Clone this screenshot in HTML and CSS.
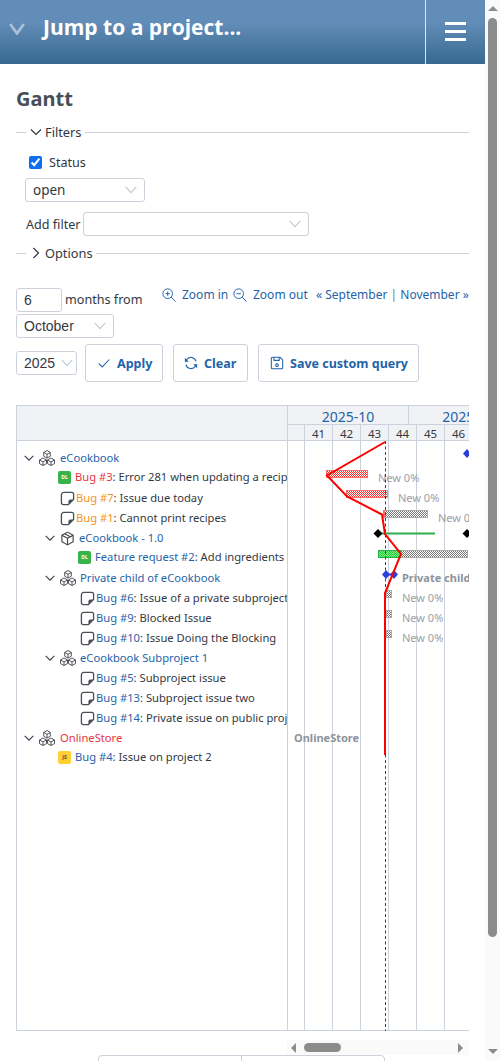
FILE: index.html
```html
<!DOCTYPE html>
<html lang="en">
<head>
<meta charset="utf-8">
<title>Gantt</title>
<link rel="stylesheet" href="styles.css">
</head>
<body>
<svg class="defs" width="0" height="0" aria-hidden="true">
  <symbol id="note" viewBox="0 0 16 16"><path d="M4 1.500h8.500a2 2 0 0 1 2 2V9L9 14.500H3.500a2 2 0 0 1-2-2V4a2.500 2.500 0 0 1 2.500-2.500z" fill="none" stroke="#4a4f57" stroke-width="1.400"/><path d="M14.500 9H11a2 2 0 0 0-2 2v3.500z" fill="#4a4f57"/></symbol>
  <symbol id="cubes" viewBox="0 0 16 16"><g fill="none" stroke="#3f444b" stroke-width=".9" stroke-linejoin="round"><path d="M8 .5l3.300 1.900v3.800L8 8.100 4.700 6.200V2.400z"/><path d="M4.700 2.400L8 4.300l3.300-1.900M8 4.300v3.800"/><path d="M4 8l3.500 2v3.600L4 15.500.5 13.600V10z"/><path d="M.5 10L4 11.900 7.500 10M4 11.900v3.600"/><path d="M12 8l3.500 2v3.600L12 15.500l-3.500-1.900V10z"/><path d="M8.500 10l3.500 1.900 3.500-1.900M12 11.900v3.600"/></g></symbol>
  <symbol id="box" viewBox="0 0 16 16"><g fill="none" stroke="#3f444b" stroke-width="1.200" stroke-linejoin="round"><path d="M8 1.200l6 3.300v7L8 14.800l-6-3.300v-7z"/><path d="M2 4.500l6 3.300 6-3.300M8 7.800v7M5 2.900l6 3.300"/></g></symbol>
  <symbol id="chev" viewBox="0 0 10 10"><path d="M.7 2.800L5 7.200l4.300-4.400" fill="none" stroke="#3f444b" stroke-width="1.200"/></symbol>
</svg>

<div class="page">
<header class="topbar">
  <svg class="jump-chev" viewBox="0 0 16 12"><path d="M1.200 1L8 10.500 14.800 1" fill="none" stroke="#a9c0d6" stroke-width="2.800"/></svg>
  <span class="jump-title">Jump to a project...</span>
  <div class="menu-btn"><span></span><span></span><span></span></div>
</header>

<main class="content">
  <h2 class="page-title">Gantt</h2>

  <div class="legend legend-filters">
    <span class="legend-line short"></span>
    <svg class="legend-icon" viewBox="0 0 12 12"><path d="M1 3.500l5 5 5-5" fill="none" stroke="#33383f" stroke-width="1.200"/></svg>
    <span>Filters</span>
    <span class="legend-line"></span>
  </div>

  <div class="filters">
    <label class="status-label"><input type="checkbox" checked> <span>Status</span></label>
    <select class="sel sel-open"><option>open</option></select>
    <div class="add-filter"><span>Add filter</span><select class="sel sel-add"><option></option></select></div>
  </div>

  <div class="legend legend-options">
    <span class="legend-line short"></span>
    <svg class="legend-icon" viewBox="0 0 12 12"><path d="M3.500 1l5 5-5 5" fill="none" stroke="#33383f" stroke-width="1.200"/></svg>
    <span>Options</span>
    <span class="legend-line"></span>
  </div>

  <div class="range-row">
    <input class="num" type="text" value="6">
    <span class="months">months from</span>
    <a class="link zoom zoom-in"><svg class="ico" viewBox="0 0 16 16"><g fill="none" stroke="#1f63a8" stroke-width="1.100"><circle cx="6.500" cy="6.500" r="5.500"/><path d="M10.500 10.500l5 5M4 6.500h5M6.500 4v5"/></g></svg>Zoom in</a>
    <a class="link zoom zoom-out"><svg class="ico" viewBox="0 0 16 16"><g fill="none" stroke="#1f63a8" stroke-width="1.100"><circle cx="6.500" cy="6.500" r="5.500"/><path d="M10.500 10.500l5 5M4 6.500h5"/></g></svg>Zoom out</a>
    <span class="pager"><a class="link">« September</a> <span class="sep">|</span> <a class="link">November »</a></span>
  </div>
  <select class="sel sel-month"><option>October</option></select>
  <div class="action-row">
    <select class="sel sel-year"><option>2025</option></select>
    <a class="btn btn-apply"><svg class="ico" viewBox="0 0 16 16"><path d="M2 8.500l4 4 8-8.500" fill="none" stroke="#1f63a8" stroke-width="1.200"/></svg>Apply</a>
    <a class="btn btn-clear"><svg class="ico" viewBox="0 0 16 16"><g fill="none" stroke="#1f63a8" stroke-width="1.300"><path d="M13.800 6.200A6 6 0 0 0 3 4.300L1.800 6"/><path d="M2.200 9.800A6 6 0 0 0 13 11.700L14.200 10"/></g><path d="M1 2v4.500h4.500zM15 14V9.500h-4.500z" fill="#1f63a8"/></svg>Clear</a>
    <a class="btn btn-save"><svg class="ico" viewBox="0 0 16 16"><g fill="none" stroke="#1f63a8" stroke-width="1.200"><path d="M3 1.500h8.500l3 3V13a1.500 1.500 0 0 1-1.500 1.500H3A1.500 1.500 0 0 1 1.500 13V3A1.500 1.500 0 0 1 3 1.500z"/><path d="M4.500 1.500v3.500h6v-3.500"/><circle cx="8" cy="10.500" r="1.500"/></g></svg>Save custom query</a>
  </div>

  <div class="gantt">
    <div class="subjects">
      <div class="subjects-head"></div>
      <div class="subjects-body">
        <div class="row lvl0 proj"><svg class="tog"><use href="#chev"/></svg><svg class="pico"><use href="#cubes"/></svg><a class="link">eCookbook</a></div>
        <div class="row issue badge-row lvl0b"><i class="badge dl">DL</i><span class="txt"><a class="red">Bug #3</a>: Error 281 when updating a recipe</span></div>
        <div class="row issue note-row lvl0n"><svg class="nico"><use href="#note"/></svg><span class="txt"><a class="orange">Bug #7</a>: Issue due today</span></div>
        <div class="row issue note-row lvl0n"><svg class="nico"><use href="#note"/></svg><span class="txt"><a class="orange">Bug #1</a>: Cannot print recipes</span></div>
        <div class="row lvl1 proj"><svg class="tog"><use href="#chev"/></svg><svg class="pico vico"><use href="#box"/></svg><a class="link">eCookbook - 1.0</a></div>
        <div class="row issue badge-row lvl1b"><i class="badge dl">DL</i><span class="txt"><a class="link">Feature request #2</a>: Add ingredients categories</span></div>
        <div class="row lvl1 proj"><svg class="tog"><use href="#chev"/></svg><svg class="pico"><use href="#cubes"/></svg><a class="link">Private child of eCookbook</a></div>
        <div class="row issue note-row lvl1n"><svg class="nico"><use href="#note"/></svg><span class="txt"><a class="link">Bug #6</a>: Issue of a private subproject</span></div>
        <div class="row issue note-row lvl1n"><svg class="nico"><use href="#note"/></svg><span class="txt"><a class="link">Bug #9</a>: Blocked Issue</span></div>
        <div class="row issue note-row lvl1n"><svg class="nico"><use href="#note"/></svg><span class="txt"><a class="link">Bug #10</a>: Issue Doing the Blocking</span></div>
        <div class="row lvl1 proj"><svg class="tog"><use href="#chev"/></svg><svg class="pico"><use href="#cubes"/></svg><a class="link">eCookbook Subproject 1</a></div>
        <div class="row issue note-row lvl1n"><svg class="nico"><use href="#note"/></svg><span class="txt"><a class="link">Bug #5</a>: Subproject issue</span></div>
        <div class="row issue note-row lvl1n"><svg class="nico"><use href="#note"/></svg><span class="txt"><a class="link">Bug #13</a>: Subproject issue two</span></div>
        <div class="row issue note-row lvl1n"><svg class="nico"><use href="#note"/></svg><span class="txt"><a class="link">Bug #14</a>: Private issue on public project</span></div>
        <div class="row lvl0 proj"><svg class="tog"><use href="#chev"/></svg><svg class="pico"><use href="#cubes"/></svg><a class="red">OnlineStore</a></div>
        <div class="row issue badge-row lvl0b"><i class="badge js">JS</i><span class="txt"><a class="link">Bug #4</a>: Issue on project 2</span></div>
      </div>
    </div>

    <div class="chart-wrap">
      <div class="chart-scroll">
        <div class="chart">
          <div class="months-head">
            <div class="month m1">2025-10</div>
            <div class="month m2">2025-11</div>
            <div class="month m3">2025-12</div>
          </div>
          <div class="weeks-head">
            <span class="wk wk-first"></span><span class="wk">41</span><span class="wk">42</span><span class="wk">43</span><span class="wk">44</span><span class="wk">45</span><span class="wk">46</span><span class="wk">47</span><span class="wk">48</span><span class="wk">49</span><span class="wk">50</span>
          </div>
          <div class="canvas">
            <div class="vlines"><span class="wk-first"></span><span></span><span></span><span></span><span></span><span></span><span></span><span></span><span></span><span></span><span></span></div>

            <div class="bar todo b3"><i class="late"></i></div>
            <div class="lbl l3">New 0%</div>
            <div class="bar todo b7"><i class="late"></i></div>
            <div class="lbl l7">New 0%</div>
            <div class="bar todo b1"><i class="late"></i></div>
            <div class="lbl l1">New 0%</div>
            <div class="bar todo b2"><i class="done"></i></div>
            <div class="bar todo s6"></div>
            <div class="lbl l6">New 0%</div>
            <div class="bar todo s9"></div>
            <div class="lbl l9">New 0%</div>
            <div class="bar todo s10"></div>
            <div class="lbl l10">New 0%</div>
            <div class="lbl strong lp">Private child of eCookbook</div>
            <div class="lbl strong lo">OnlineStore</div>

            <svg class="overlay" width="724" height="590">
              <path d="M97.500 0V590" stroke="#d40000" stroke-width="1" stroke-dasharray="3 2.500" fill="none"/>
              <path d="M90 92.500H147" stroke="#2fae4a" stroke-width="2" fill="none"/>
              <polygon points="90,88 94.500,92.500 90,97 85.500,92.500" fill="#000"/>
              <polygon points="179,88 183.500,92.500 179,97 174.500,92.500" fill="#000"/>
              <path d="M98 133.500H106" stroke="#2b3fe0" stroke-width="2" fill="none"/>
              <polygon points="98,129 102,133.500 98,138 94,133.500" fill="#2b3fe0"/>
              <polygon points="106,129 110,133.500 106,138 102,133.500" fill="#2b3fe0"/>
              <polygon points="179,8 183,12.500 179,17 175,12.500" fill="#2b3fe0"/>
              <path d="M97 1L39 34.500 59 55.500 94 73.500 97 93 113 113 97 152V314" fill="none" stroke="#ff0000" stroke-width="2"/>
            </svg>
          </div>
        </div>
      </div>
      <div class="hbar"><i class="arrow arrow-left"></i><i class="hthumb"></i><i class="arrow arrow-right"></i></div>
    </div>
  </div>

  <div class="tabs-row">
    <div class="tabs"><span class="tab tab-a"></span><span class="tab tab-b"></span></div>
  </div>
</main>
</div>

<div class="vbar"><i class="arrow arrow-up"></i><i class="vthumb"></i><i class="arrow arrow-down"></i></div>
</body>
</html>
```
FILE: styles.css
```css
* { box-sizing: border-box; }
html, body { margin: 0; padding: 0; height: 1061px; overflow: hidden; }
body {
  display: flex;
  background: #fff;
  color: #33383f;
  font-family: "Noto Sans", sans-serif;
  font-size: 12.6px;
}
.defs { position: absolute; }
.page { width: 485px; flex: none; height: 1061px; overflow: hidden; }
a { text-decoration: none; }
.link { color: #1f63a8; }
.red { color: #e8353f; }
.orange { color: #f4941c; }

.vbar {
  width: 15px;
  flex: none;
  height: 1061px;
  background: #fafafa;
  display: flex;
  flex-direction: column;
  align-items: center;
  padding: 6px 0 7px;
}
.vthumb { display: block; width: 9px; height: 919px; margin-top: 7px; background: #8c8c8c; border-radius: 5px; }
.arrow { display: block; width: 0; height: 0; flex: none; }
.arrow-up { border: 5px solid transparent; border-top: 0; border-bottom-color: #8c8c8c; }
.arrow-down { border: 5px solid transparent; border-bottom: 0; border-top-color: #8c8c8c; margin-top: auto; }
.arrow-left { border: 5px solid transparent; border-left: 0; border-right-color: #8c8c8c; }
.arrow-right { border: 5px solid transparent; border-right: 0; border-left-color: #8c8c8c; margin-left: auto; }

.topbar {
  height: 64px;
  display: flex;
  align-items: center;
  background: linear-gradient(#628db8 0, #628db8 22px, #38698f 64px);
  color: #fff;
}
.jump-chev { width: 16px; height: 12px; margin-left: 9px; margin-top: -6px; flex: none; }
.jump-title {
  margin-left: 18px;
  margin-top: -10px;
  font-family: "Open Sans", sans-serif;
  font-size: 21px;
  font-weight: 700;
  flex: 1;
}
.menu-btn {
  width: 60px;
  height: 64px;
  border-left: 1px solid #dde6ee;
  display: flex;
  flex-direction: column;
  align-items: center;
  justify-content: center;
  gap: 5px;
  flex: none;
  padding-bottom: 2px;
}
.menu-btn span { display: block; width: 21px; height: 3px; background: #fff; }

.content { padding: 0 16px; }
.page-title {
  margin: 21px 0 0;
  font-size: 20px;
  line-height: 27px;
  font-weight: 700;
  color: #484f58;
}
.legend { display: flex; align-items: center; height: 18px; color: #33383f; font-size: 12.8px; }
.legend-filters { margin-top: 11px; }
.legend-line { flex: 1; height: 1px; background: #ccd2dc; margin-left: 3px; }
.legend-line.short { flex: none; width: 10px; margin: 0 4px 0 0; }
.legend-icon { width: 12px; height: 12px; margin-right: 3px; flex: none; }

.filters { padding: 0 0 0 9px; }
.status-label { display: flex; align-items: center; height: 20px; margin: 11px 0 0 4px; }
.status-label input { width: 13px; height: 13px; margin: 0 7px 0 0; accent-color: #0b6ff0; }
.sel {
  appearance: none;
  display: block;
  height: 24px;
  border: 1px solid #ccd2dc;
  border-radius: 3px;
  color: #33383f;
  background: #fff url("data:image/svg+xml,%3Csvg xmlns='http://www.w3.org/2000/svg' viewBox='0 0 12 8'%3E%3Cpath d='M.7.8L6 6.700 11.300.8' fill='none' stroke='%23c4c8d4' stroke-width='1.100'/%3E%3C/svg%3E") no-repeat right 7px center / 12px 8px;
  padding: 0 0 0 7px;
  font-family: "Liberation Sans", sans-serif;
  font-size: 14px;
}
.sel-open { width: 120px; margin-top: 6px; font-family: "Noto Sans", sans-serif; font-size: 13.500px; }
.add-filter { display: flex; align-items: center; margin-top: 10px; gap: 2px; margin-left: 1px; }
.sel-add { width: 226px; }
.legend-options { margin-top: 8px; }

.range-row { display: flex; align-items: flex-start; margin-top: 26px; height: 26px; }
.num {
  width: 46px;
  height: 24px;
  border: 1px solid #ccd2dc;
  border-radius: 3px;
  padding: 0 0 0 7px;
  color: #33383f;
  font-family: "Liberation Sans", sans-serif;
  font-size: 14px;
}
.months { margin-left: 3px; line-height: 24px; width: 97px; flex: none; }
.zoom { display: flex; align-items: center; font-size: 12px; line-height: 14px; }
.ico { width: 14px; height: 14px; flex: none; }
.zoom .ico { margin-right: 6px; }
.zoom-in { width: 71px; }
.zoom-out { width: 83px; }
.pager { font-size: 12px; line-height: 14px; white-space: nowrap; color: #777; }
.sep { margin: 0; }
.sel-month { width: 98px; }
.action-row { display: flex; align-items: center; margin-top: 6px; height: 38px; }
.sel-year { width: 61px; margin-right: 8px; background-position: right 3px center; }
.btn {
  display: flex;
  align-items: center;
  height: 38px;
  border: 1px solid #ccd2dc;
  border-radius: 3px;
  color: #1f63a8;
  font-size: 12.500px;
  font-weight: 700;
  padding-left: 11px;
  white-space: nowrap;
}
.btn .ico { margin-right: 6px; }
.btn-apply { width: 78px; margin-right: 10px; }
.btn-clear { width: 75px; margin-right: 10px; padding-left: 10px; }
.btn-save { width: 161px; }

.gantt { display: flex; margin-top: 23px; align-items: flex-start; }
.subjects {
  width: 272px;
  height: 626px;
  border: 1px solid #ccd2dc;
  flex: none;
  overflow: hidden;
}
.subjects-head { height: 35px; background: #f0f2f5; border-bottom: 1px solid #ccd2dc; }
.subjects-body { padding-top: 7px; }
.row { display: flex; align-items: center; height: 20px; font-size: 11.200px; white-space: nowrap; }
.row .txt, .row a { line-height: 20px; }
.tog { width: 10px; height: 10px; margin-right: 5px; flex: none; }
.pico { width: 16px; height: 16px; margin-right: 5px; flex: none; }
.vico { width: 15px; height: 15px; margin-right: 5px; }
.nico { width: 15px; height: 15px; margin-right: 1px; flex: none; }
.lvl0 { padding-left: 7px; }
.lvl0b { padding-left: 41px; }
.lvl0n { padding-left: 43px; }
.lvl1 { padding-left: 28px; }
.lvl1 .pico { margin-right: 4px; }
.lvl1b { padding-left: 61px; }
.lvl1n { padding-left: 63px; }
.issue.badge-row { position: relative; top: -1px; }
.badge {
  width: 13px;
  height: 13px;
  border-radius: 2px;
  margin-right: 4px;
  flex: none;
  font-style: normal;
  font-size: 5px;
  font-weight: 700;
  line-height: 13px;
  text-align: center;
}
.badge.dl { background: #37b34a; color: #fff; }
.badge.js { background: #ffcf33; color: #3f444b; }

.chart-wrap { width: 181px; height: 650px; flex: none; }
.chart-scroll { width: 181px; height: 626px; overflow: hidden; }
.chart { width: 724px; height: 626px; border-top: 1px solid #ccd2dc; border-bottom: 1px solid #ccd2dc; position: relative; }
.months-head { display: flex; height: 18px; }
.month {
  background: #f0f2f5;
  border-right: 1px solid #ccd2dc;
  text-align: center;
  color: #1f63a8;
  font-size: 14px;
  line-height: 21px;
  overflow: hidden;
}
.m1 { width: 121px; }
.m2 { width: 120px; }
.m3 { width: 140px; }
.weeks-head { display: flex; height: 17px; border-top: 1px solid #ccd2dc; background: #f0f2f5; border-bottom: 1px solid #ccd2dc; }
.wk { width: 28px; flex: none; text-align: center; font-size: 11.500px; line-height: 17px; border-left: 1px solid #ccd2dc; color: #33383f; }
.wk.wk-first { width: 16px; border-left: 0; }
.canvas { position: relative; height: 589px; }
.vlines { position: absolute; inset: 0; display: flex; }
.vlines span { width: 28px; flex: none; border-left: 1px solid #ccd2dc; }
.vlines .wk-first { width: 16px; border-left: 0; }

.bar {
  position: absolute;
  height: 8px;
  border: 1px solid #a9a9a9;
  background: #fff url("data:image/svg+xml,%3Csvg xmlns='http://www.w3.org/2000/svg' width='2' height='2' shape-rendering='crispEdges'%3E%3Crect width='1' height='1' fill='%23777'/%3E%3Crect x='1' y='1' width='1' height='1' fill='%23777'/%3E%3C/svg%3E") 0 0 / 2px 2px;
}
.bar i { position: absolute; left: -1px; top: -1px; bottom: -1px; display: block; }
.late {
  width: 42px;
  border: 1px solid #ff6b6b;
  background: #fff url("data:image/svg+xml,%3Csvg xmlns='http://www.w3.org/2000/svg' width='2' height='2' shape-rendering='crispEdges'%3E%3Crect width='1' height='1' fill='%23ff3030'/%3E%3Crect x='1' y='1' width='1' height='1' fill='%23ff3030'/%3E%3C/svg%3E") 0 0 / 2px 2px;
}
.done {
  width: 23px;
  border: 1px solid #28b040;
  background: #7dec88 url("data:image/svg+xml,%3Csvg xmlns='http://www.w3.org/2000/svg' width='2' height='2' shape-rendering='crispEdges'%3E%3Crect width='1' height='1' fill='%2322d03a'/%3E%3Crect x='1' y='1' width='1' height='1' fill='%2322d03a'/%3E%3C/svg%3E") 0 0 / 2px 2px;
}
.b3 { left: 38px; top: 29px; width: 42px; }
.b7 { left: 58px; top: 49px; width: 42px; }
.b7 .late { width: 40px; }
.b1 { left: 95px; top: 69px; width: 45px; }
.b1 .late { width: 2px; }
.b2 { left: 90px; top: 109px; width: 90px; }
.s6, .s9, .s10 { left: 98px; width: 6px; }
.s6 { top: 149px; }
.s9 { top: 169px; }
.s10 { top: 189px; }
.lbl { position: absolute; font-size: 11px; line-height: 14px; color: #9aa0a8; white-space: nowrap; }
.strong { font-weight: 700; color: #8d939b; }
.l3 { left: 90px; top: 30px; }
.l7 { left: 110px; top: 50px; }
.l1 { left: 150px; top: 70px; }
.l6 { left: 114px; top: 150px; }
.l9 { left: 114px; top: 170px; }
.l10 { left: 114px; top: 190px; }
.lp { left: 114px; top: 130px; }
.lo { left: 6px; top: 290px; }
.overlay { position: absolute; left: 0; top: 0; }

.hbar {
  display: flex;
  align-items: center;
  height: 15px;
  margin: 9px 0 0 -1px;
  padding: 0 6px 0 4px;
  background: #fafafa;
}
.hthumb { display: block; width: 37px; height: 9px; margin-left: 8px; background: #8c8c8c; border-radius: 5px; }

.tabs-row { display: flex; padding-left: 82px; }
.tabs { display: flex; width: 287px; height: 40px; border: 1px solid #ccd2dc; border-radius: 4px 4px 0 0; }
.tab-a { width: 143px; border-right: 1px solid #ccd2dc; }
```
